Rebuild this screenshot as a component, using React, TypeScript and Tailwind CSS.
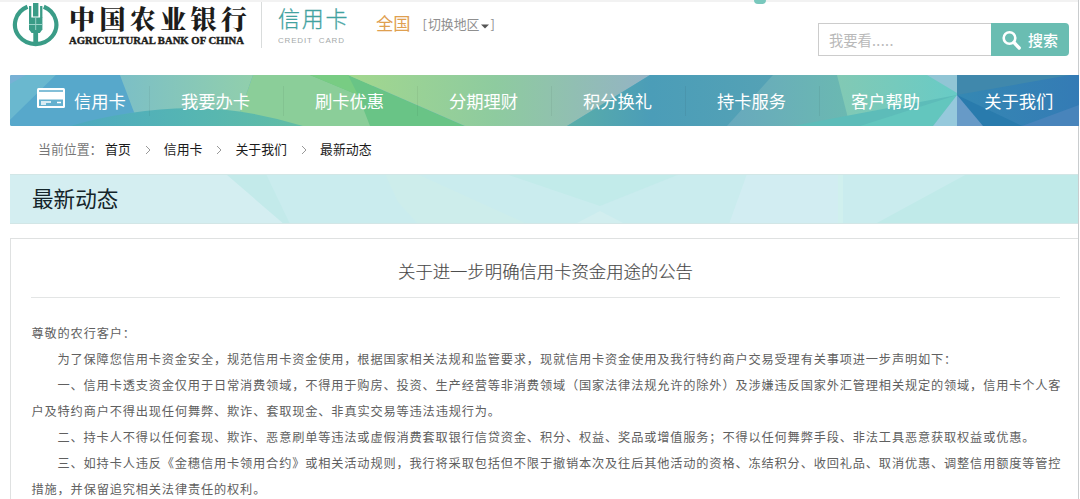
import React from "react";

const navItems = ["我要办卡", "刷卡优惠", "分期理财", "积分换礼", "持卡服务", "客户帮助"];
const crumbs = ["首页", "信用卡", "关于我们", "最新动态"];

const paragraphs: { text: string; indent: boolean }[] = [
  { text: "尊敬的农行客户：", indent: false },
  { text: "为了保障您信用卡资金安全，规范信用卡资金使用，根据国家相关法规和监管要求，现就信用卡资金使用及我行特约商户交易受理有关事项进一步声明如下：", indent: true },
  { text: "一、信用卡透支资金仅用于日常消费领域，不得用于购房、投资、生产经营等非消费领域（国家法律法规允许的除外）及涉嫌违反国家外汇管理相关规定的领域，信用卡个人客", indent: true },
  { text: "户及特约商户不得出现任何舞弊、欺诈、套取现金、非真实交易等违法违规行为。", indent: false },
  { text: "二、持卡人不得以任何套现、欺诈、恶意刷单等违法或虚假消费套取银行信贷资金、积分、权益、奖品或增值服务；不得以任何舞弊手段、非法工具恶意获取权益或优惠。", indent: true },
  { text: "三、如持卡人违反《金穗信用卡领用合约》或相关活动规则，我行将采取包括但不限于撤销本次及往后其他活动的资格、冻结积分、收回礼品、取消优惠、调整信用额度等管控", indent: true },
  { text: "措施，并保留追究相关法律责任的权利。", indent: false },
];

function BankLogo() {
  return (
    <svg className="ml-[2px] block h-[46px] w-[48px] shrink-0" viewBox="0 0 48 46">
      <path d="M15.500 4.800A20.700 19.400 0 1 0 31.800 4.800" fill="none" stroke="#3a9c87" strokeWidth="4.200" />
      <g fill="#3a9c87">
        <rect x="21" y="1" width="5.400" height="13.500" />
        <rect x="17" y="4" width="2.300" height="12" />
        <rect x="28.100" y="4" width="2.300" height="12" />
        <path d="M17 15.500h13.400v12l-2.600 3.500h-8.200L17 27.500z" />
        <rect x="21.300" y="29" width="4.800" height="14" />
      </g>
      <path d="M23.700 15v13M17 22.500h13.400" stroke="#9ad3c8" strokeWidth="1" fill="none" />
    </svg>
  );
}

function NavBackground() {
  return (
    <svg className="absolute inset-0 h-full w-full" viewBox="0 0 1069 51" preserveAspectRatio="none">
      <defs>
        <linearGradient id="mint"><stop offset="0" stopColor="#7cbfc6" /><stop offset="1" stopColor="#91cfac" /></linearGradient>
        <linearGradient id="field" gradientUnits="userSpaceOnUse" x1="330" x2="640" y1="0" y2="0">
          <stop offset="0" stopColor="#a4d88d" /><stop offset="0.5" stopColor="#8ecb9f" /><stop offset="1" stopColor="#94b3c5" />
        </linearGradient>
        <linearGradient id="ocean"><stop offset="0" stopColor="#5aaea8" /><stop offset="0.4" stopColor="#4b9db8" /><stop offset="1" stopColor="#55a2b5" /></linearGradient>
        <linearGradient id="haze"><stop offset="0" stopColor="#68a9bd" /><stop offset="1" stopColor="#6bb9b1" /></linearGradient>
        <linearGradient id="aqua"><stop offset="0" stopColor="#82c9b4" /><stop offset="1" stopColor="#68cbc6" /></linearGradient>
        <linearGradient id="blue" x1="0" y1="0" x2="1" y2="0"><stop offset="0" stopColor="#3588b3" /><stop offset="1" stopColor="#347bb5" /></linearGradient>
        <linearGradient id="hill"><stop offset="0" stopColor="#4ea9c0" /><stop offset="0.5" stopColor="#55b5b3" /><stop offset="1" stopColor="#62bda5" /></linearGradient>
      </defs>
      <rect width="1069" height="51" fill="#5eadcc" />
      <path d="M0 0h46L0 45z" fill="#6ab8cf" />
      <path d="M0 0h16L0 9z" fill="#78b1d5" />
      <path d="M46 0h64l14 37L60 51H0v-6z" fill="#57a8cb" />
      <path d="M110 0h133l-13 37-50 8H127z" fill="url(#mint)" />
      <path d="M243 0h120v51H225z" fill="#8bce99" />
      <path d="M60 51Q120 34 180 33Q235 33 293 51z" fill="url(#hill)" />
      <path d="M338 0l117 51h-95l-12-31-48-20z" fill="#69c486" />
      <path d="M300 0h38l10 20z" fill="#78cc83" />
      <path d="M338 0h302l-83 51H455z" fill="url(#field)" />
      <path d="M640 0h127v51H557z" fill="url(#ocean)" />
      <path d="M763 0h66l12 51H717z" fill="url(#haze)" />
      <path d="M827 0h120v51H840z" fill="url(#aqua)" />
      <path d="M783 51L947 20v31z" fill="#5dbcb9" />
      <path d="M850 51l97-31-24 31z" fill="#63c6be" />
      <path d="M917 0h30v18z" fill="#91c5d5" />
      <path d="M923 51l24-31v31z" fill="#96c9dc" />
      <rect x="947" width="122" height="51" fill="url(#blue)" />
      <path d="M947 20L1060 0H947z" fill="#4088ac" />
      <path d="M947 20l65 31h-43z" fill="#297bad" />
      <path d="M947 20l26 31h-26z" fill="#679ac7" />
      <path d="M1069 30v21h-57z" fill="#4884bb" />
    </svg>
  );
}

function BannerBackground() {
  return (
    <svg className="absolute inset-0 h-full w-full" viewBox="0 0 1068 50" preserveAspectRatio="none">
      <rect width="1068" height="50" fill="#caecee" />
      <path d="M0 0h216l58 50H0z" fill="#d4eef1" />
      <path d="M216 0h40l24 50h-6z" fill="#c3eaea" />
      <path d="M375 0h32l110 50H408l-20-22z" fill="#cdedeb" />
      <path d="M496 0h174l-80 32z" fill="#c2ebea" />
      <path d="M565 50l25-13 25 13z" fill="#d2eeef" />
      <path d="M737 0h91v50H719z" fill="#d2edf2" />
      <path d="M828 0h5v50h-5z" fill="#d0f0ee" />
      <path d="M957 0h111v50H865z" fill="#c0eae9" />
      <path d="M0 .5h1068M0 49.500h1068" stroke="#d2e6e6" />
    </svg>
  );
}

export default function App() {
  return (
    <div className="flex h-[499px] w-[1080px] overflow-hidden bg-white font-['Noto_Sans_CJK_SC','Liberation_Sans',sans-serif] whitespace-nowrap">
      <div className="relative flex w-[1079px] shrink-0 flex-col border-r border-[#c9ccce] pl-[10px]">
        <div className="absolute top-0 left-0 h-[2px] w-full bg-[#f2f2f2]" />
        <div className="absolute top-0 left-[754px] h-[4px] w-[12px] rounded-b-full bg-[#79c8bd]" />
        <header className="flex h-[75px] shrink-0 items-start pt-[2px]">
          <div className="flex h-[46px] w-[252px] gap-[9px] border-r border-[#d9dcdc]">
            <BankLogo />
            <div className="flex flex-col">
              <div className="mt-px flex h-[32px] w-[178px] justify-between font-['Noto_Serif_CJK_SC','Noto_Sans_CJK_SC',serif] text-[26px] leading-[30px] font-black text-[#1d1d1b]">
                {"中国农业银行".split("").map((c) => <span key={c}>{c}</span>)}
              </div>
              <svg className="-mt-px block h-[16px] w-[180px] overflow-visible" viewBox="0 0 180 16">
                <text x="0" y="12" textLength="175" lengthAdjust="spacingAndGlyphs" className="fill-[#1d1d1b] stroke-[#1d1d1b] stroke-[0.4px] font-['Liberation_Serif',serif] text-[10.500px] font-bold">AGRICULTURAL BANK OF CHINA</text>
              </svg>
            </div>
          </div>
          <div className="ml-[16px] flex w-[72px] flex-col pt-px">
            <span className="text-[22px] leading-[28px] tracking-[1.800px] font-light text-[#42a2a0] [-webkit-text-stroke:0.3px_#42a2a0]">信用卡</span>
            <svg className="mt-[3px] block h-[10px] w-[68px]" viewBox="0 0 68 10">
              <text x="0" y="8.500" textLength="66" className="fill-[#a5aaaa] font-['Liberation_Sans',sans-serif] text-[8px]">CREDIT&#160; CARD</text>
            </svg>
          </div>
          <span className="ml-[26px] pt-[8px] text-[17.300px] leading-[26px] text-[#dfa050]">全国</span>
          <div className="ml-[12px] flex items-center pt-[10px] text-[12.900px] leading-[24px] text-[#8f8f8f]">
            <span className="mr-px">[</span>切换地区
            <svg className="mr-[2px] ml-px mt-[4px] h-[5px] w-[8px]" viewBox="0 0 8 5"><path d="M0 .5h8L4 4.500z" fill="#555" /></svg>
            <span>]</span>
          </div>
          <div className="mt-[21px] mr-[9px] ml-auto flex h-[33px] w-[251px]">
            <div className="w-[173px] border border-r-0 border-[#ccc] pl-[10px] text-[14.300px] leading-[31px] text-[#b9b9b9]">我要看<span className="tracking-[0.400px]">.....</span></div>
            <div className="flex flex-1 items-center rounded-r-[4px] bg-[#6abdb2] pl-[11px] text-[15px] text-white">
              <svg className="mr-[7px] h-[20px] w-[19px] shrink-0" viewBox="0 0 19 20" fill="none" stroke="white"><circle cx="7.500" cy="8" r="5.800" strokeWidth="2.600" /><path d="M12 12.500l5.200 5.500" strokeWidth="3.400" strokeLinecap="round" /></svg>
              <span className="leading-[30px] font-medium">搜索</span>
            </div>
          </div>
        </header>

        <nav className="relative -mr-px h-[51px] w-[1069px] shrink-0 overflow-hidden rounded-l-[2px]">
          <NavBackground />
          <div className="relative flex h-full text-[17.300px] leading-[51px] text-white">
            <div className="flex w-[138.500px] items-center pl-[27px]">
              <svg className="mr-[9px] -mt-[5px] h-[20px] w-[28px]" viewBox="0 0 28 20">
                <rect width="28" height="20" rx="1.500" fill="white" />
                <path d="M2 3h24" stroke="#5aaacb" strokeWidth="1.600" />
                <path d="M2 11.500h24v6.500H2z" fill="#64b1cf" />
                <path d="M4 14h10M4 16h5M20 14.500h4" stroke="white" strokeWidth="1.400" />
              </svg>
              <span className="-mt-px">信用卡</span>
            </div>
            {navItems.map((item) => (
              <div key={item} className="flex w-[134px] items-center justify-center">
                <span className="-mr-px h-[30px] w-px bg-black/5" />
                <span className="mx-auto -mt-px">{item}</span>
              </div>
            ))}
            <div className="-mt-px flex flex-1 items-center justify-center pl-[6px]">关于我们</div>
          </div>
        </nav>

        <div className="flex h-[48px] shrink-0 items-center pb-[2px] pl-[28px] text-[12.900px] leading-[20px] text-[#1b1b1b]">
          <span className="w-[67px] text-[#777]">当前位置：</span>
          {crumbs.map((crumb, i) => (
            <React.Fragment key={crumb}>
              {i > 0 && <svg className="mt-px mr-[13px] ml-[14px] h-[10px] w-[6px]" viewBox="0 0 6 10" fill="none" stroke="#999"><path d="M1 1l4 4-4 4" /></svg>}
              <span>{crumb}</span>
            </React.Fragment>
          ))}
        </div>

        <section className="relative h-[50px] w-[1068px] shrink-0">
          <BannerBackground />
          <h1 className="relative pl-[22px] text-[21.600px] leading-[48px] text-[#14252a]">最新动态</h1>
        </section>

        <main className="mt-[14px] flex flex-1 flex-col border-t border-l border-[#dfe1e1] pl-[20px]">
          <h2 className="mr-[18px] h-[59px] shrink-0 border-b border-[#e3e5e5] text-center text-[17.350px] leading-[63px] font-light text-[#444] [-webkit-text-stroke:0.2px_#666]">关于进一步明确信用卡资金用途的公告</h2>
          <div className="mt-[22px] pl-[0.500px] text-[12.200px] leading-[26px] tracking-[0.850px] text-[#606060]">
            {paragraphs.map((p) => (
              <p key={p.text} className={p.indent ? "pl-[26px]" : "pl-0"}>{p.text}</p>
            ))}
          </div>
        </main>
      </div>
    </div>
  );
}
